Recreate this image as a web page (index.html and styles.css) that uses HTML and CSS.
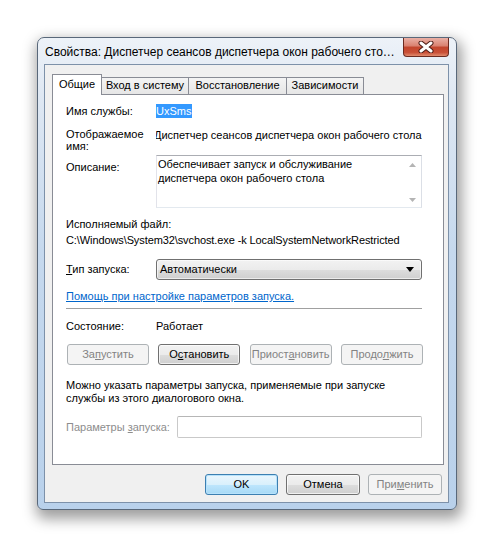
FILE: index.html
```html
<!DOCTYPE html>
<html lang="ru">
<head>
<meta charset="utf-8">
<title>Свойства</title>
<link rel="stylesheet" href="styles.css">
</head>
<body>
<div class="window">
  <div class="titlebar">
    <div class="title">Свойства: Диспетчер сеансов диспетчера окон рабочего стола (Локальный компьютер)</div>
    <div class="close">
      <svg width="16" height="12" viewBox="0 0 16 12"><path d="M3 2 L13 10 M13 2 L3 10" stroke="#4a1a14" stroke-width="5" stroke-linecap="round"/><path d="M3 2 L13 10 M13 2 L3 10" stroke="#ffffff" stroke-width="3" stroke-linecap="round"/></svg>
    </div>
  </div>
  <div class="client">
    <div class="tabs">
      <div class="tab tab-sel t1">Общие</div>
      <div class="tab t2">Вход в систему</div>
      <div class="tab t3">Восстановление</div>
      <div class="tab t4">Зависимости</div>
    </div>
    <div class="panel">
      <div class="row r-name">
        <div class="label">Имя службы:</div>
        <div class="value"><span class="sel">UxSms</span></div>
      </div>
      <div class="row r-disp">
        <div class="label two">Отображаемое<br>имя:</div>
        <div class="value clip"><span class="shift">Диспетчер сеансов диспетчера окон рабочего стола</span></div>
      </div>
      <div class="row r-desc">
        <div class="label pad">Описание:</div>
        <div class="textbox">
          <div class="tb-text">Обеспечивает запуск и обслуживание<br>диспетчера окон рабочего стола</div>
          <div class="sbar">
            <svg width="7" height="4" viewBox="0 0 7 4"><path d="M0 4 L3.5 0 L7 4Z" fill="#b4b4b4"/></svg>
            <svg width="7" height="4" viewBox="0 0 7 4"><path d="M0 0 L3.5 4 L7 0Z" fill="#b4b4b4"/></svg>
          </div>
        </div>
      </div>
      <div class="line l-exec">Исполняемый файл:</div>
      <div class="line l-path">C:\Windows\System32\svchost.exe -k LocalSystemNetworkRestricted</div>
      <div class="row r-type">
        <div class="label"><u>Т</u>ип запуска:</div>
        <div class="combo">
          <span>Автоматически</span>
          <svg width="8" height="5" viewBox="0 0 8 5"><path d="M0 0 L4 5 L8 0Z" fill="#000"/></svg>
        </div>
      </div>
      <div class="line l-link"><span class="link">Помощь при настройке параметров запуска.</span></div>
      <div class="sep"></div>
      <div class="row r-state">
        <div class="label">Состояние:</div>
        <div class="value">Работает</div>
      </div>
      <div class="btnrow">
        <div class="btn dis">За<u>п</u>устить</div>
        <div class="btn">О<u>с</u>тановить</div>
        <div class="btn dis">Приост<u>а</u>новить</div>
        <div class="btn dis">Продо<u>л</u>жить</div>
      </div>
      <div class="para">Можно указать параметры запуска, применяемые при запуске<br>службы из этого диалогового окна.</div>
      <div class="row r-param">
        <div class="label grey">Параметры <u>з</u>апуска:</div>
        <div class="input"></div>
      </div>
    </div>
    <div class="footer">
      <div class="btn btn-def">OK</div>
      <div class="btn fbtn">Отмена</div>
      <div class="btn dis fbtn">При<u>м</u>енить</div>
    </div>
  </div>
</div>
</body>
</html>
```

FILE: styles.css
```css
* { box-sizing: border-box; }
html, body { margin: 0; padding: 0; background: #ffffff; }
body {
  font-family: "Liberation Sans", Arial, sans-serif;
  font-size: 11px;
  color: #000;
  width: 494px;
  height: 548px;
  overflow: hidden;
}
.window {
  margin: 37px 0 0 37px;
  width: 420px;
  height: 473px;
  border: 1px solid #59687a;
  border-radius: 7px 7px 6px 6px;
  background: linear-gradient(180deg, #edf2f8 0%, #dfe8f3 12%, #c6d9ee 45%, #b9d1eb 100%);
  box-shadow: 2px 6px 14px 3px rgba(0,0,0,0.38);
  padding: 0 7px 6px 6px;
  display: flex;
  flex-direction: column;
}
.titlebar {
  height: 26px;
  display: flex;
  align-items: flex-start;
  justify-content: space-between;
}
.title {
  width: 352px;
  margin-left: 1px;
  padding-top: 7px;
  font-size: 12px;
  line-height: 15px;
  white-space: nowrap;
  overflow: hidden;
  text-overflow: ellipsis;
  color: #000;
}
.close {
  width: 46px;
  height: 19px;
  border: 1px solid #6b2a20;
  border-top: none;
  border-radius: 0 0 4px 4px;
  background: linear-gradient(180deg, #eab0a5 0%, #d9806f 45%, #c2452d 50%, #c94f36 80%, #e08a6d 100%);
  display: flex;
  align-items: center;
  justify-content: center;
}
.client {
  height: 440px;
  border: 1px solid #7d91a9;
  background: #f0f0f0;
  padding: 9px 6px 0 7px;
  display: flex;
  flex-direction: column;
}
.tabs {
  display: flex;
  height: 20px;
  align-items: flex-start;
}
.tab {
  height: 17px;
  margin-top: 3px;
  border: 1px solid #898c95;
  border-bottom: none;
  background: linear-gradient(180deg, #f4f4f4, #e6e6e6);
  text-align: center;
  line-height: 15px;
  white-space: nowrap;
  margin-left: -1px;
}
.tab-sel {
  height: 21px;
  margin-top: 0;
  margin-left: 0;
  background: #fff;
  position: relative;
  z-index: 1;
  line-height: 19px;
}
.t1 { width: 50px; }
.t2 { width: 88px; }
.t3 { width: 99px; }
.t4 { width: 78px; }
.panel {
  width: 392px;
  height: 371px;
  border: 1px solid #898c95;
  background: #fff;
  padding: 9px 0 0 13px;
}
.row { display: flex; width: 356px; }
.label { width: 90px; flex: none; line-height: 14px; white-space: nowrap; }
.value { flex: 1; line-height: 14px; white-space: nowrap; }
.sel { background: #3399ff; color: #fff; padding: 0 1px 0 0; display: inline-block; line-height: 14px; }
.r-name { height: 14px; }
.r-disp { margin-top: 10px; height: 24px; }
.r-disp .label { line-height: 12px; }
.r-disp .value { line-height: 14px; }
.clip { overflow: hidden; }
.shift { display: inline-block; margin-left: -2px; }
.r-desc { margin-top: 3px; height: 53px; }
.label.pad { padding-top: 6px; line-height: 13px; }
.textbox {
  width: 266px;
  height: 53px;
  border: 1px solid #abadb3;
  border-left-color: #e2e3ea;
  border-right-color: #dbdfe6;
  border-bottom-color: #e3e9ef;
  display: flex;
  background: #fff;
}
.tb-text { flex: 1; padding: 1px 0 0 1px; line-height: 14px; }
.sbar {
  width: 17px;
  display: flex;
  flex-direction: column;
  justify-content: space-between;
  align-items: center;
  padding: 7px 0 5px;
}
.line { line-height: 13px; white-space: nowrap; }
.l-exec { margin-top: 10px; }
.l-path { margin-top: 3px; letter-spacing: -0.1px; }
.r-type { margin-top: 12px; height: 21px; align-items: center; }
.combo {
  width: 266px;
  height: 21px;
  border: 1px solid #707070;
  border-radius: 3px;
  background: linear-gradient(180deg, #f2f2f2 0%, #ebebeb 50%, #dddddd 51%, #cfcfcf 100%);
  display: flex;
  align-items: center;
  justify-content: space-between;
  padding: 0 7px 0 3px;
  box-shadow: inset 0 0 0 1px rgba(255,255,255,0.6);
}
.l-link { margin-top: 10px; }
.link { color: #0066cc; text-decoration: underline; }
.sep { margin-top: 5px; height: 1px; width: 356px; background: #a0a0a0; }
.r-state { margin-top: 11px; height: 13px; }
.r-state .label, .r-state .value { line-height: 13px; }
.btnrow {
  margin-top: 11px;
  width: 357px;
  display: flex;
  justify-content: space-between;
  padding-left: 1px;
}
.btn {
  width: 82px;
  height: 21px;
  border: 1px solid #707070;
  border-radius: 3px;
  background: linear-gradient(180deg, #f2f2f2 0%, #ebebeb 50%, #dddddd 51%, #cfcfcf 100%);
  box-shadow: inset 0 0 0 1px rgba(255,255,255,0.7);
  text-align: center;
  line-height: 19px;
  white-space: nowrap;
}
.btn.dis {
  border-color: #adb2b5;
  background: #f4f4f4;
  color: #838383;
  box-shadow: none;
}
.para { margin-top: 14px; line-height: 13px; }
.r-param { margin-top: 11px; height: 22px; align-items: center; }
.r-param .label { width: 111px; }
.grey { color: #8d8d8d; }
.input {
  width: 245px;
  height: 22px;
  border: 1px solid #c9c9c9;
  border-top-color: #b6b6b6;
  border-radius: 2px;
  background: #fff;
}
.footer {
  margin-top: 9px;
  display: flex;
  justify-content: flex-end;
  gap: 8px;
  padding-right: 0;
}
.footer .btn { width: 73px; }
.footer .fbtn { width: 74px; }
.btn-def {
  border-color: #3c7fb1;
  background: linear-gradient(180deg, #eaf6fd 0%, #d9f0fc 50%, #bee6fd 51%, #a7d9f5 100%);
  box-shadow: inset 0 0 0 1px #b7e2fb;
}
```
